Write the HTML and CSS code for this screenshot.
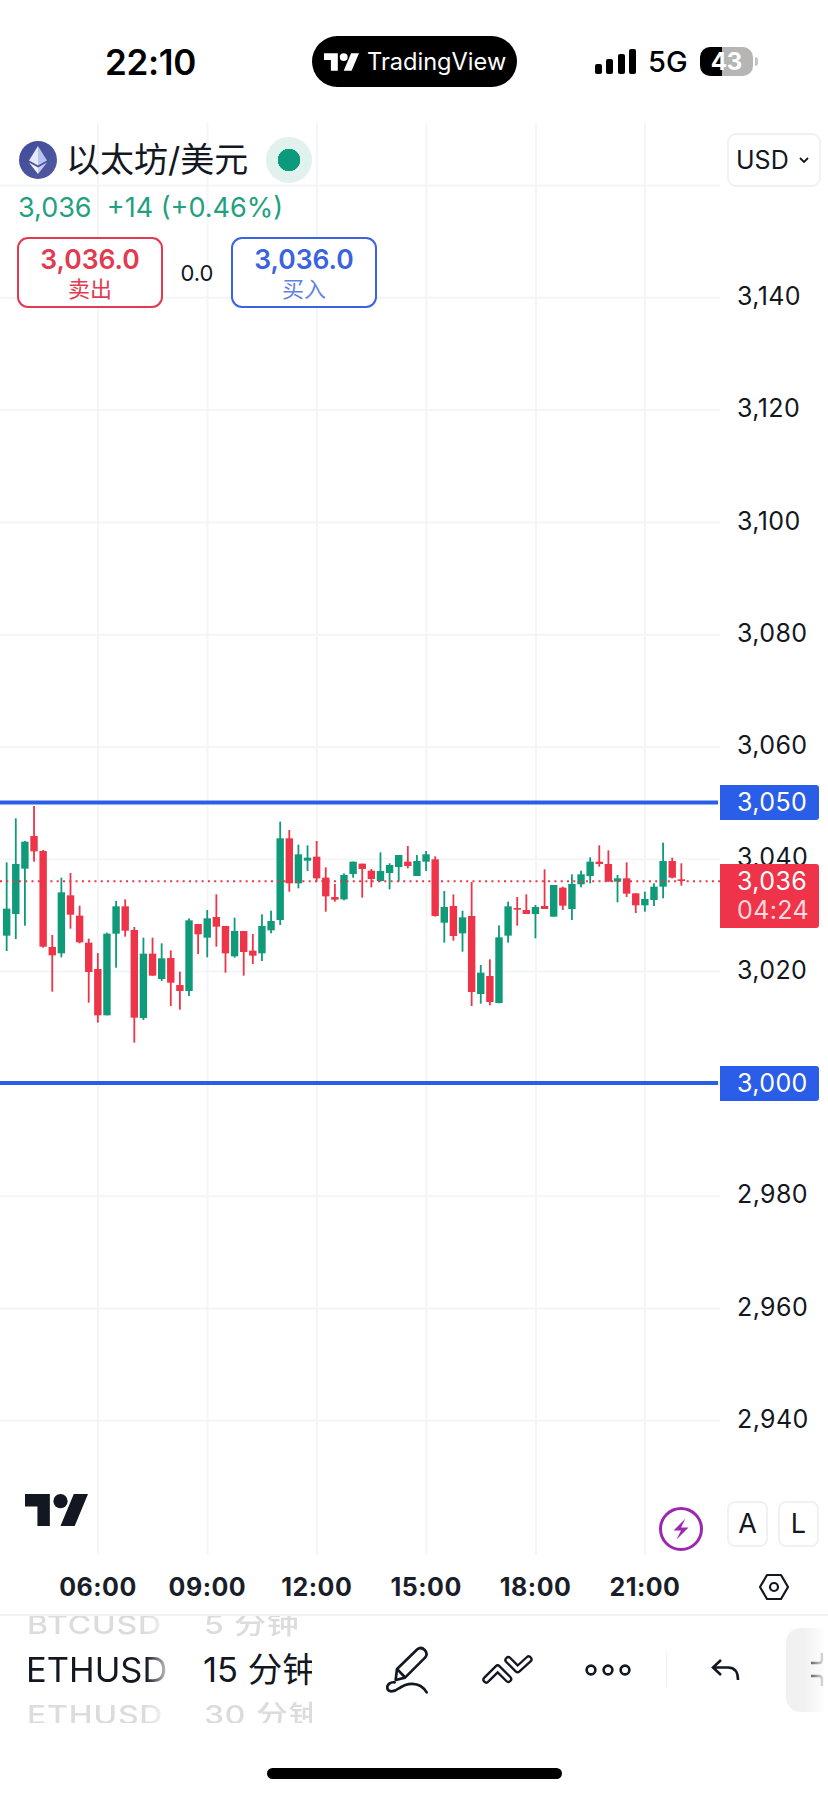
FILE: index.html
```html
<!DOCTYPE html>
<html lang="zh-CN">
<head>
    <meta charset="utf-8">
    <title>以太坊/美元 - TradingView</title>
    <meta name="viewport" content="width=device-width, initial-scale=1">
    <link rel="stylesheet" href="styles.css">
</head>
<body>
    <div class="phone">
        <div class="status-bar">
            <div class="clock">22:10</div>
            <div class="app-pill">
                <svg class="pill-logo" viewBox="0 4 35.5 18"><path d="M14 22H7V11H0V4h14v18zM28 22h-8l7.5-18h8L28 22z"/><circle cx="20" cy="8" r="4"/></svg>
                <span>TradingView</span>
            </div>
            <div class="signal"><i class="b1"></i><i class="b2"></i><i class="b3"></i><i class="b4"></i></div>
            <div class="network">5G</div>
            <div class="battery">43</div>
        </div>

        <div class="chart-pane">
            <svg id="plot" class="plot" width="720" height="1432" viewBox="0 123 720 1432"></svg>

            <div class="price-axis">
                <div class="tick">3,140</div>
                <div class="tick">3,120</div>
                <div class="tick">3,100</div>
                <div class="tick">3,080</div>
                <div class="tick">3,060</div>
                <div class="tick">3,040</div>
                <div class="tick">3,020</div>
                <div class="tick">3,000</div>
                <div class="tick">2,980</div>
                <div class="tick">2,960</div>
                <div class="tick">2,940</div>
                <div class="marker marker-3050">3,050</div>
                <div class="marker marker-last">
                    <span>3,036</span>
                    <span class="countdown">04:24</span>
                </div>
                <div class="marker marker-3000">3,000</div>
            </div>

            <div class="legend">
                <div class="legend-title">
                    <svg class="eth-icon" viewBox="0 0 38 38">
                        <defs><linearGradient id="ethBg" x1="0" y1="0" x2="1" y2="1"><stop offset="0" stop-color="#3f4c9c"/><stop offset="1" stop-color="#525a9e"/></linearGradient></defs>
                        <circle cx="19" cy="19" r="19" fill="url(#ethBg)"/>
                        <polygon points="19,5 10,19.5 19,24.5" fill="#e6e9fb"/>
                        <polygon points="19,5 28,19.5 19,24.5" fill="#b9c1ee"/>
                        <polygon points="10,21.5 19,33 19,26.5" fill="#f2f3fd"/>
                        <polygon points="28,21.5 19,33 19,26.5" fill="#c8cef3"/>
                    </svg>
                    <span class="symbol-name">以太坊/美元</span>
                    <span class="market-dot"></span>
                </div>
                <div class="legend-price">3,036&nbsp; +14 (+0.46%)</div>
                <div class="trade-row">
                    <div class="trade-btn sell"><b>3,036.0</b><span>卖出</span></div>
                    <div class="spread">0.0</div>
                    <div class="trade-btn buy"><b>3,036.0</b><span>买入</span></div>
                </div>
            </div>

            <div class="currency">USD
                <svg class="chevron" viewBox="0 0 10 6"><path d="M1 1l4 4 4-4" fill="none" stroke="#131722" stroke-width="1.8"/></svg>
            </div>

            <svg class="tv-logo" viewBox="0 4 35.5 18"><path d="M14 22H7V11H0V4h14v18zM28 22h-8l7.5-18h8L28 22z"/><circle cx="20" cy="8" r="4"/></svg>

            <svg class="bolt-badge" viewBox="0 0 46 46">
                <circle cx="23" cy="23" r="20.5" fill="#fff" stroke="#9c27b0" stroke-width="3"/>
                <path d="M27.5 12.5L15.5 24.5h7.5L18.5 33.5l12-12h-7.5z" fill="#9c27b0"/>
            </svg>

            <div class="scale-btn scale-a">A</div>
            <div class="scale-btn scale-l">L</div>
        </div>

        <div class="time-axis">
            <div class="time">06:00</div>
            <div class="time">09:00</div>
            <div class="time">12:00</div>
            <div class="time">15:00</div>
            <div class="time">18:00</div>
            <div class="time">21:00</div>
            <svg class="hex-icon" viewBox="0 0 32 28">
                <path d="M9 2h14l7 12-7 12H9L2 14z" fill="none" stroke="#131722" stroke-width="2.2" stroke-linejoin="round"/>
                <circle cx="16" cy="14" r="4" fill="none" stroke="#131722" stroke-width="2.2"/>
            </svg>
        </div>

        <div class="toolbar">
            <div class="wheel wheel-symbol">
                <div class="wheel-row ghost ghost-top">BTCUSD</div>
                <div class="wheel-row current">ETHUSD</div>
                <div class="wheel-row ghost ghost-bottom">ETHUSD</div>
            </div>
            <div class="wheel wheel-interval">
                <div class="wheel-row ghost ghost-top">5 分钟</div>
                <div class="wheel-row current">15 分钟</div>
                <div class="wheel-row ghost ghost-bottom">30 分钟</div>
            </div>
            <svg class="tool tool-pen" viewBox="40 40 140 150">
                <g fill="none" stroke="#131722" stroke-width="8" stroke-linecap="round" stroke-linejoin="round">
                    <path d="M75 145L79 112 140 53Q151 44 162 55 173 66 163 78L103 138z"/>
                    <path d="M81 114L102 136"/>
                    <path d="M72 152C60 150 48 158 50 170 52 182 70 182 85 170 105 155 145 145 168 182"/>
                </g>
            </svg>
            <svg class="tool tool-lines" viewBox="200 550 160 95">
                <g fill="none" stroke-linecap="round" stroke-linejoin="round">
                    <path d="M216 627L250 593 282 625M282 568L310 596 343 566" stroke="#131722" stroke-width="24"/>
                    <path d="M216 627L250 593 282 625M282 568L310 596 343 566" stroke="#fff" stroke-width="10"/>
                </g>
            </svg>
            <svg class="tool tool-dots" viewBox="0 0 46 12">
                <g fill="none" stroke="#131722" stroke-width="2.6">
                    <circle cx="6" cy="6" r="4.4"/><circle cx="23" cy="6" r="4.4"/><circle cx="40" cy="6" r="4.4"/>
                </g>
            </svg>
            <span class="tool-sep"></span>
            <svg class="tool tool-undo" viewBox="0 0 30 24">
                <path d="M10 2L2 9.5l8 7.5M2 9.5h15c6 0 10 4 10 12.5" fill="none" stroke="#131722" stroke-width="2.6"/>
            </svg>
            <div class="tool-side">
                <svg class="side-icon" viewBox="0 0 16 34">
                    <path d="M13 0v7q0 3-3 3H2M2 23h8q3 0 3 3v7" fill="none" stroke="#222" stroke-width="2.4"/>
                </svg>
            </div>
        </div>

        <div class="home-area"><div class="home-bar"></div></div>
    </div>

    <script src="chart.js"></script>
</body>
</html>
```

FILE: styles.css
```css
* {
    box-sizing: border-box;
}
body {
    margin: 0;
    background-color: #fff;
    color: #131722;
    font-family: Inter, "Noto Sans CJK SC", sans-serif;
}
.phone {
    width: 828px;
    height: 1796px;
    overflow: hidden;
    background-color: #fff;
}

/* status bar */
.status-bar {
    height: 123px;
    padding: 36px 0 0 105px;
    display: flex;
    align-items: flex-start;
}
.clock {
    width: 207px;
    height: 51px;
    line-height: 53px;
    font-size: 35px;
    font-weight: 600;
    letter-spacing: -0.3px;
    color: #000;
}
.app-pill {
    width: 205px;
    height: 51px;
    border-radius: 26px;
    background-color: #000;
    color: #fff;
    display: flex;
    align-items: center;
    padding-left: 12px;
    font-size: 23.6px;
}
.pill-logo {
    width: 35px;
    height: 18px;
    fill: #fff;
    margin-right: 8px;
}
.signal {
    margin-left: 78px;
    width: 41px;
    height: 51px;
    display: flex;
    align-items: flex-end;
    justify-content: space-between;
    padding-bottom: 13px;
}
.signal i {
    width: 7px;
    background-color: #000;
    border-radius: 2px;
}
.signal .b1 { height: 10px; }
.signal .b2 { height: 15px; }
.signal .b3 { height: 20px; }
.signal .b4 { height: 25px; }
.network {
    margin-left: 12px;
    width: 52px;
    height: 51px;
    line-height: 51px;
    font-size: 29px;
    font-weight: 500;
    color: #000;
}
.battery {
    position: relative;
    margin-top: 11px;
    width: 53px;
    height: 29px;
    line-height: 29px;
    border-radius: 10px;
    background: linear-gradient(to right, #000 42%, #b5b5b5 42%);
    color: #fff;
    font-size: 24px;
    font-weight: 700;
    text-align: center;
}
.battery::after {
    content: "";
    position: absolute;
    left: 55px;
    top: 10px;
    width: 3px;
    height: 9px;
    border-radius: 0 3px 3px 0;
    background-color: #c4c4c4;
}

/* chart */
.chart-pane {
    position: relative;
    display: flex;
    height: 1432px;
}
.plot {
    display: block;
    flex: none;
}
.price-axis {
    position: relative;
    width: 108px;
    padding-top: 117px;
}
.tick {
    height: 112.3px;
    line-height: 112.3px;
    padding-left: 17px;
    font-size: 25px;
    font-weight: 400;
    letter-spacing: 0.4px;
    color: #131722;
}
.marker {
    position: absolute;
    left: 0;
    width: 99px;
    padding-left: 17px;
    border-radius: 0 3px 3px 0;
    color: #fff;
    font-size: 25px;
    letter-spacing: 0.4px;
}
.marker-3050, .marker-3000 {
    height: 35px;
    line-height: 35px;
    background-color: #2a5ee8;
}
.marker-3050 { top: 662px; }
.marker-3000 { top: 943px; }
.marker-last {
    top: 741px;
    height: 64px;
    background-color: #ef3349;
    display: flex;
    flex-direction: column;
    justify-content: center;
    line-height: 29px;
}
.countdown {
    color: #ffd9dd;
}

/* legend over the chart */
.legend {
    position: absolute;
    left: 17px;
    top: 14px;
}
.legend-title {
    height: 46px;
    display: flex;
    align-items: center;
}
.eth-icon {
    width: 38px;
    height: 38px;
    margin-left: 2px;
}
.symbol-name {
    margin-left: 9px;
    padding-bottom: 5px;
    font-size: 34px;
    color: #131722;
}
.market-dot {
    width: 46px;
    height: 46px;
    margin-left: 18px;
    border-radius: 50%;
    background: radial-gradient(circle, #0c9a7c 11px, #e0f1ee 11.5px);
}
.legend-price {
    margin-top: 10px;
    height: 30px;
    line-height: 30px;
    padding-left: 1px;
    font-size: 27px;
    color: #22a07f;
}
.trade-row {
    margin-top: 14px;
    display: flex;
    align-items: center;
}
.trade-btn {
    width: 146px;
    height: 71px;
    border: 2px solid;
    border-radius: 11px;
    display: flex;
    flex-direction: column;
    align-items: center;
    justify-content: center;
    background-color: #fff;
}
.trade-btn b {
    font-size: 26.5px;
    font-weight: 600;
    line-height: 32px;
}
.trade-btn span {
    font-size: 22px;
    line-height: 28px;
}
.sell {
    border-color: #e23a50;
    color: #e23a50;
}
.buy {
    border-color: #3a63e0;
    color: #3a63e0;
}
.buy span {
    color: #5f82e6;
}
.spread {
    width: 68px;
    text-align: center;
    font-size: 22px;
    color: #131722;
}
.currency {
    position: absolute;
    left: 727px;
    top: 10px;
    width: 94px;
    height: 54px;
    padding-left: 7px;
    border: 2px solid #f0f1f3;
    border-radius: 9px;
    background-color: #fff;
    display: flex;
    align-items: center;
    font-size: 25px;
}
.chevron {
    width: 10px;
    height: 6px;
    margin-left: 10px;
}
.tv-logo {
    position: absolute;
    left: 25px;
    top: 1371px;
    width: 63px;
    height: 32px;
    fill: #131722;
}
.bolt-badge {
    position: absolute;
    left: 658px;
    top: 1383px;
    width: 46px;
    height: 46px;
}
.scale-btn {
    position: absolute;
    top: 1378px;
    width: 41px;
    height: 46px;
    line-height: 42px;
    border: 2px solid #f0f1f3;
    border-radius: 8px;
    background-color: #fff;
    text-align: center;
    font-size: 27px;
}
.scale-a { left: 727px; }
.scale-l { left: 778px; }

/* time axis */
.time-axis {
    height: 59px;
    padding: 4px 0 0 43.3px;
    display: flex;
    align-items: center;
}
.time {
    width: 109.4px;
    text-align: center;
    font-size: 25px;
    font-weight: 700;
    letter-spacing: 0.5px;
    color: #1a1e29;
}
.hex-icon {
    width: 32px;
    height: 28px;
    margin-left: 58px;
}

/* bottom toolbar */
.toolbar {
    height: 109px;
    border-top: 2px solid #f3f3f4;
    display: flex;
    align-items: center;
    overflow: hidden;
}
.wheel {
    height: 107px;
    display: flex;
    flex-direction: column;
    justify-content: center;
    overflow: hidden;
    flex: none;
}
.wheel-symbol {
    margin-left: 26px;
    width: 141px;
    -webkit-mask-image: linear-gradient(to right, #000 85%, rgba(0,0,0,0.25));
    mask-image: linear-gradient(to right, #000 85%, rgba(0,0,0,0.25));
}
.wheel-interval {
    margin-left: 36px;
    width: 109px;
}
.wheel-row {
    flex: none;
    height: 45px;
    line-height: 45px;
    white-space: nowrap;
}
.current {
    font-size: 34.5px;
}
.ghost {
    padding-left: 1px;
    color: #dcdcdc;
    font-weight: 500;
    font-size: 32px;
    letter-spacing: 0.8px;
    transform: scaleY(0.8);
}
.tool {
    display: block;
    flex: none;
}
.tool-pen {
    width: 46.7px;
    height: 50px;
    margin-left: 72px;
}
.tool-lines {
    width: 53.3px;
    height: 31.7px;
    margin-left: 50px;
}
.tool-dots {
    width: 46px;
    height: 12px;
    margin-left: 51px;
}
.tool-sep {
    width: 1px;
    height: 35px;
    margin-left: 35px;
    background-color: #f1f1f2;
    flex: none;
}
.tool-undo {
    width: 30px;
    height: 24px;
    margin-left: 44px;
}
.tool-side {
    width: 60px;
    height: 84px;
    margin-left: 45px;
    flex: none;
    border-radius: 14px;
    background-color: #f1f1f2;
    display: flex;
    align-items: center;
    padding-left: 23px;
    -webkit-mask-image: linear-gradient(to right, #000 30%, transparent 68%);
    mask-image: linear-gradient(to right, #000 30%, transparent 68%);
}
.side-icon {
    width: 16px;
    height: 34px;
}

/* home indicator */
.home-area {
    padding-top: 45px;
}
.home-bar {
    width: 295px;
    height: 11px;
    margin-left: 267px;
    border-radius: 6px;
    background-color: #000;
}
```

FILE: chart.js
```js
var NS = 'http://www.w3.org/2000/svg';
var plot = document.getElementById('plot');

// color, wick top, body top, body bottom, wick bottom
// y values are in 1/3 px, measured from y = 780 on the page
var candles = [
    ['g',247,386,467,513], ['g',115,252,402,477], ['g',183,185,266,437], ['r',78,168,214,245],
    ['r',210,213,500,503], ['r',465,501,526,635], ['g',293,337,520,532], ['r',279,346,404,446],
    ['r',377,407,487,490], ['r',476,488,576,668], ['r',519,567,706,728], ['g',458,461,706,706],
    ['g',363,379,461,563], ['r',358,379,452,470], ['r',441,450,713,788], ['g',473,521,714,720],
    ['r',473,521,587,587], ['g',490,535,597,603], ['r',511,534,608,678], ['r',575,615,633,689],
    ['g',415,421,633,648], ['r',432,432,463,522], ['g',390,415,473,532], ['r',343,411,440,500],
    ['r',438,438,520,578], ['g',413,453,529,533], ['r',453,453,516,587], ['r',462,512,527,552],
    ['g',403,438,520,543], ['g',392,423,451,460], ['g',125,175,420,435], ['r',150,175,310,335],
    ['g',194,223,310,325], ['g',196,233,242,273], ['r',183,230,295,305], ['r',262,293,349,395],
    ['r',312,351,359,365], ['g',280,285,358,361], ['g',245,245,282,293], ['r',251,251,267,353],
    ['r',267,272,297,322], ['g',217,273,303,305], ['g',250,255,279,328], ['g',225,225,261,305],
    ['r',198,245,258,265], ['g',225,243,288,288], ['g',213,223,245,273], ['r',229,238,408,410],
    ['g',333,381,428,488], ['r',343,378,468,482], ['g',392,412,460,515], ['r',306,408,636,678],
    ['g',555,578,642,671], ['r',538,588,666,676], ['g',436,472,669,670], ['g',365,379,467,488],
    ['r',351,384,389,437], ['r',343,390,402,402], ['g',375,381,402,475], ['r',268,378,387,387],
    ['g',315,315,410,410], ['r',320,323,377,390], ['g',283,312,387,420], ['g',272,283,313,322],
    ['g',232,245,288,310], ['r',196,245,252,260], ['r',211,252,305,305], ['g',285,295,305,367],
    ['r',247,295,341,351], ['r',340,340,376,399], ['g',335,357,376,395], ['g',310,320,360,378],
    ['g',188,243,320,355], ['r',233,243,293,295], ['r',250,298,303,317]
];

var colors = { g: '#0f9a7a', r: '#ee3448' };
var GRID = '#f4f5f7';

function add(tag, attrs) {
    var el = document.createElementNS(NS, tag);
    for (var k in attrs) el.setAttribute(k, attrs[k]);
    plot.appendChild(el);
}

function toY(v) {
    return 780 + v / 3;
}

// grid
[98, 207.5, 317, 426.5, 536, 645].forEach(function (x) {
    add('line', { x1: x, x2: x, y1: 123, y2: 1555, stroke: GRID, 'stroke-width': 2 });
});
for (var i = 0; i < 12; i++) {
    var gy = 185.5 + i * 112.3;
    add('line', { x1: 0, x2: 720, y1: gy, y2: gy, stroke: GRID, 'stroke-width': 2 });
}

// horizontal levels
add('rect', { x: 0, y: 800.5, width: 718, height: 4, fill: '#2a5ee8' });
add('rect', { x: 0, y: 1081, width: 718, height: 4, fill: '#2a5ee8' });

// candles
candles.forEach(function (c, i) {
    var x = 6.67 + i * 9.117;
    var col = colors[c[0]];
    add('rect', { x: x - 0.9, y: toY(c[1]), width: 1.8, height: (c[4] - c[1]) / 3, fill: col });
    add('rect', { x: x - 3.7, y: toY(c[2]), width: 7.4, height: (c[3] - c[2]) / 3, fill: col });
});

// last price line
add('line', {
    x1: 0, x2: 720, y1: 881.3, y2: 881.3,
    stroke: '#ee3448', 'stroke-width': 2, 'stroke-dasharray': '2 4.3'
});
```
